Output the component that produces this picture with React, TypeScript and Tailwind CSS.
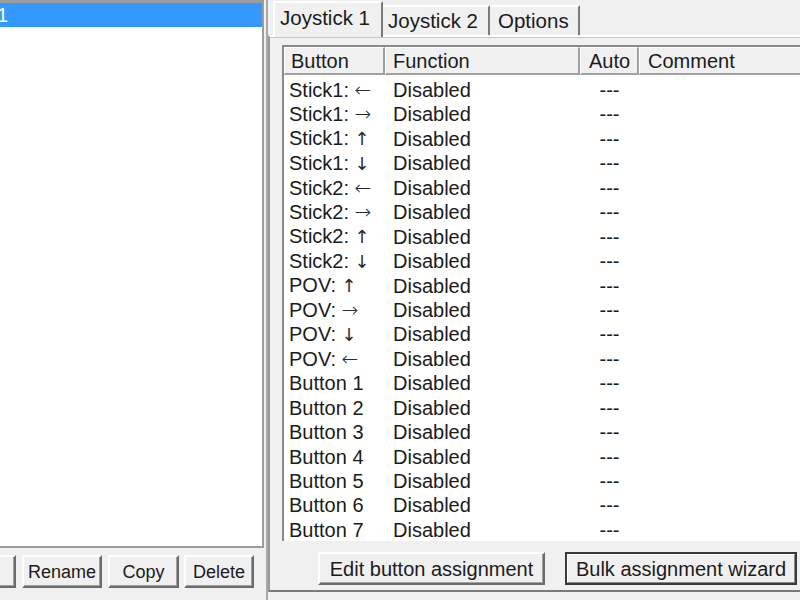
import React from "react";

const rows: [string, string, string][] = [
  ["Stick1: ", "←", "Disabled"],
  ["Stick1: ", "→", "Disabled"],
  ["Stick1: ", "↑", "Disabled"],
  ["Stick1: ", "↓", "Disabled"],
  ["Stick2: ", "←", "Disabled"],
  ["Stick2: ", "→", "Disabled"],
  ["Stick2: ", "↑", "Disabled"],
  ["Stick2: ", "↓", "Disabled"],
  ["POV: ", "↑", "Disabled"],
  ["POV: ", "→", "Disabled"],
  ["POV: ", "↓", "Disabled"],
  ["POV: ", "←", "Disabled"],
  ["Button 1", "", "Disabled"],
  ["Button 2", "", "Disabled"],
  ["Button 3", "", "Disabled"],
  ["Button 4", "", "Disabled"],
  ["Button 5", "", "Disabled"],
  ["Button 6", "", "Disabled"],
  ["Button 7", "", "Disabled"],
];

function Arrow({ a }: { a: string }) {
  if (a === "←" || a === "→") {
    return (
      <span
        className="text-[#2a2a2a] font-extralight"
        style={{ fontFamily: '"DejaVu Sans ExtraLight", "DejaVu Sans", sans-serif', fontSize: "20px" }}
      >
        {a}
      </span>
    );
  }
  return (
    <span
      className="text-[#2a2a2a] font-normal"
      style={{ fontFamily: '"DejaVu Sans", sans-serif', fontSize: "18px" }}
    >
      {a}
    </span>
  );
}

function Btn({ children, className = "" }: { children?: React.ReactNode; className?: string }) {
  return (
    <div
      className={
        "h-[33px] shrink-0 flex items-center justify-center leading-[20px] bg-[#f0f0f0] border-t-2 border-l-2 border-r-2 border-b-2 border-t-[#ffffff] border-l-[#ffffff] border-r-[#6a6a6a] border-b-[#6a6a6a] shadow-[inset_-1px_-1px_0_#a0a0a0] " +
        className
      }
    >
      {children}
    </div>
  );
}

export default function App() {
  return (
    <div
      className="w-[800px] h-[600px] bg-[#f0f0f0] flex overflow-hidden text-[20px] text-[#1b1b1b] leading-none"
      style={{ fontFamily: '"Liberation Sans", Arial, sans-serif' }}
    >
      {/* Left column */}
      <div className="w-[264px] shrink-0 flex flex-col">
        <div className="h-[548px] bg-white border-t-[3px] border-r-2 border-b-2 border-[#9c9c9c] overflow-hidden">
          <div className="h-[24px] bg-[#3399ff] text-white flex items-center leading-[22px]">
            <span className="-ml-[3px]">1</span>
          </div>
        </div>
        <div className="flex pt-[7px] text-[18px]">
          <Btn className="w-[76px] -ml-[60px]"></Btn>
          <Btn className="w-[80px] ml-[6px]">Rename</Btn>
          <Btn className="w-[71px] ml-[6px]">Copy</Btn>
          <Btn className="w-[70px] ml-[5px]">Delete</Btn>
        </div>
      </div>

      {/* splitter */}
      <div className="w-[4px] shrink-0 border-r-2 border-[#a8a8a8]"></div>

      {/* Right column */}
      <div className="flex-1 flex flex-col pb-[8px] min-w-0">
        {/* Tabs */}
        <div className="h-[35px] shrink-0 flex items-end pl-[5px] relative z-10">
          <div className="h-[36px] w-[110px] -mb-[2px] bg-[#f0f0f0] border-t-2 border-l-2 border-r-2 border-t-[#ffffff] border-l-[#ffffff] border-r-[#7a7a7a] flex items-start pt-[4px] pl-[5px] text-[20.5px] leading-[22px]">
            Joystick 1
          </div>
          <div className="h-[30px] w-[107px] bg-[#f0f0f0] border-t-2 border-r-2 border-t-[#ffffff] border-r-[#7a7a7a] flex items-start pt-[3px] pl-[5px] text-[20.5px] leading-[22px]">
            Joystick 2
          </div>
          <div className="h-[30px] w-[90px] bg-[#f0f0f0] border-t-2 border-r-2 border-t-[#ffffff] border-r-[#7a7a7a] flex items-start pt-[3px] pl-[8px] text-[20.5px] leading-[22px]">
            Options
          </div>
        </div>

        {/* Panel */}
        <div className="flex-1 flex flex-col border-t-2 border-l-2 border-b-2 border-t-[#ffffff] border-l-[#9a9a9a] border-b-[#7a7a7a] shadow-[inset_0_1px_0_#c8c8c8] pt-[8px] pl-[12px] min-h-0">
          {/* List view */}
          <div className="h-[496px] shrink-0 bg-white border-t-2 border-l-2 border-[#8a8a8a] overflow-hidden">
            <div className="h-[28px] flex bg-[#f0f0f0] leading-[22px]">
              <div className="w-[101px] shrink-0 flex items-center pl-[6px] border-t border-l border-r-2 border-b-2 border-t-white border-l-white border-r-[#a0a0a0] border-b-[#a0a0a0]">
                Button
              </div>
              <div className="w-[195px] shrink-0 flex items-center pl-[7px] border-t border-l border-r-2 border-b-2 border-t-white border-l-white border-r-[#a0a0a0] border-b-[#a0a0a0]">
                Function
              </div>
              <div className="w-[59px] shrink-0 flex items-center pl-[8px] border-t border-l border-r-2 border-b-2 border-t-white border-l-white border-r-[#a0a0a0] border-b-[#a0a0a0]">
                Auto
              </div>
              <div className="flex-1 flex items-center pl-[8px] border-t border-l border-b-2 border-t-white border-l-white border-b-[#a0a0a0]">
                Comment
              </div>
            </div>
            <div className="pt-[3px]">
              {rows.map(([b, a, f], i) => (
                <div key={i} className="h-[24.45px] flex items-center leading-[24.45px]">
                  <div className="w-[101px] shrink-0 pl-[5px] whitespace-nowrap">
                    {b}
                    {a && <Arrow a={a} />}
                  </div>
                  <div className="w-[195px] shrink-0 pl-[8px]">{f}</div>
                  <div className="w-[59px] shrink-0 text-center">---</div>
                  <div className="flex-1"></div>
                </div>
              ))}
            </div>
          </div>

          {/* bottom buttons */}
          <div className="flex pt-[11px] pl-[36px]">
            <Btn className="w-[227px]">Edit button assignment</Btn>
            <div className="ml-[20px] h-[33px] w-[232px] shrink-0 border-2 border-[#3a3a3a]">
              <div className="h-full w-full flex items-center justify-center leading-[20px] bg-[#f0f0f0] border-t border-l border-r border-b border-t-white border-l-white border-r-[#8a8a8a] border-b-[#8a8a8a]">
                Bulk assignment wizard
              </div>
            </div>
          </div>
        </div>
      </div>
    </div>
  );
}
